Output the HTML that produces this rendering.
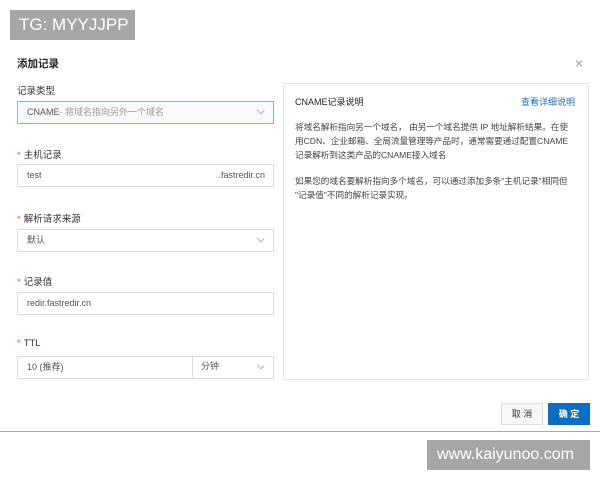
<!DOCTYPE html>
<html><head><meta charset="utf-8"><style>
*{margin:0;padding:0;box-sizing:border-box}
body{width:600px;height:480px;background:#fff;position:relative;overflow:hidden;font-family:"Liberation Sans","Noto Sans CJK SC",sans-serif;color:#333}
.a{position:absolute}
.badge{background:#a6a6a6;color:#fff;font-size:17px;line-height:30px;padding-left:9px}
.lbl{font-size:9.5px;color:#333;left:17px}
.lbl b{color:#e0603a;font-weight:normal;margin-right:3px}
.box{left:17px;width:257px;height:23px;border:1px solid #dcdcdc;font-size:9px;line-height:21px;padding-left:9px;color:#555}
.chev{position:absolute;right:10px;top:6px;width:5px;height:5px;border-right:1px solid #bbb;border-bottom:1px solid #bbb;transform:rotate(45deg) scaleX(1.3)}
.p{font-size:8.6px;color:#444;line-height:14px;white-space:nowrap}
</style></head><body>
<div class="a badge" style="left:10px;top:10px;width:125px;height:30px">TG: MYYJJPP</div>
<div class="a" style="left:17px;top:56px;font-size:10.5px;font-weight:bold;color:#222">添加记录</div>
<div class="a" style="left:575px;top:55px;font-size:14px;color:#999">×</div>

<div class="a lbl" style="top:83px">记录类型</div>
<div class="a box" style="top:101px;border-color:#8fb0cc;background:#f7f9fb">CNAME<span style="color:#999">- 将域名指向另外一个域名</span><i class="chev"></i></div>

<div class="a lbl" style="top:147px"><b>*</b>主机记录</div>
<div class="a box" style="top:164px">test<span style="position:absolute;right:8px">.fastredir.cn</span></div>

<div class="a lbl" style="top:211px"><b>*</b>解析请求来源</div>
<div class="a box" style="top:229px">默认<i class="chev"></i></div>

<div class="a lbl" style="top:274px"><b>*</b>记录值</div>
<div class="a box" style="top:292px">redir.fastredir.cn</div>

<div class="a lbl" style="top:338px"><b>*</b>TTL</div>
<div class="a box" style="top:356px">10 (推荐)<span style="position:absolute;left:174px;top:-1px;height:23px;border-left:1px solid #dcdcdc;padding-left:8px">分钟</span><i class="chev"></i></div>

<div class="a" style="left:283px;top:83px;width:306px;height:297px;border:1px solid #e6e6e6"></div>
<div class="a" style="left:295px;top:95px;font-size:9px;color:#222">CNAME记录说明</div>
<div class="a" style="left:521px;top:95px;font-size:9px;color:#1f6fc0">查看详细说明</div>
<div class="a p" style="left:295px;top:120px">将域名解析指向另一个域名， 由另一个域名提供 IP 地址解析结果。在使<br>用CDN、企业邮箱、全局流量管理等产品时，通常需要通过配置CNAME<br>记录解析到这类产品的CNAME接入域名</div>
<div class="a p" style="left:295px;top:174px">如果您的域名要解析指向多个域名，可以通过添加多条"主机记录"相同但<br>"记录值"不同的解析记录实现。</div>

<div class="a" style="left:501px;top:403px;width:42px;height:22px;border:1px solid #ddd;background:#f7f7f7;font-size:9px;line-height:20px;text-align:center;color:#333">取 消</div>
<div class="a" style="left:548px;top:403px;width:42px;height:22px;background:#0a6fc4;font-size:9px;line-height:22px;text-align:center;color:#fff;font-weight:bold">确 定</div>
<div class="a" style="left:0;top:431px;width:600px;height:1px;background:#aaa"></div>
<div class="a badge" style="left:427px;top:440px;width:163px;height:30px;font-size:16px;padding-left:10px">www.kaiyunoo.com</div>
</body></html>
